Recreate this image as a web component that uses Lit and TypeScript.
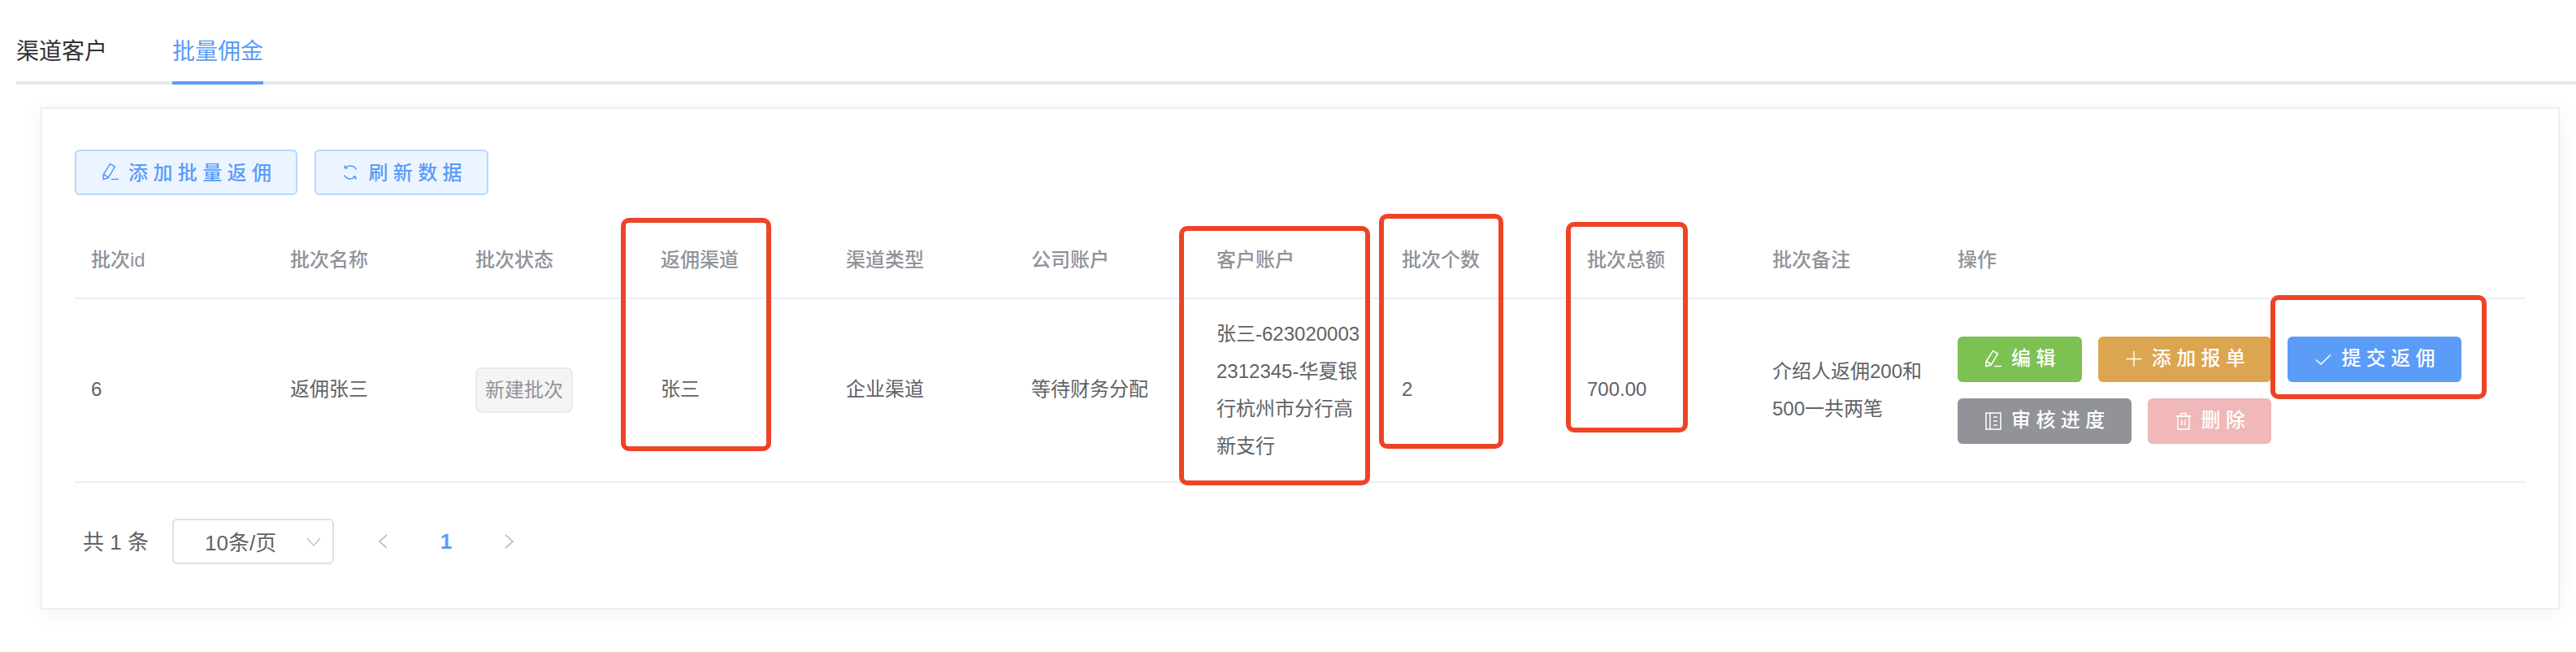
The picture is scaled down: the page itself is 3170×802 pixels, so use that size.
import { LitElement, css, html, svg } from "lit";
import { customElement } from "lit/decorators.js";

interface IAction {
  label: string;
  icon: keyof typeof ICONS;
  tone: string;
}

const ICONS = {
  edit: svg`<path d="M3 15 11.5 1.5 17.5 5 9 19 3 20.5Z"/><path d="M3.5 14.5 9 18"/><path d="M13 20.5H22"/>`,
  refresh: svg`<path d="M19.5 8.5A9 9 0 0 0 5.5 6.5"/><path d="M5.2 3.2 5.4 6.8 9 6.8"/><path d="M4.5 15.5A9 9 0 0 0 18.5 17.5"/><path d="M18.8 20.8 18.6 17.2 15 17.2"/>`,
  plus: svg`<path d="M12 2V21"/><path d="M2.5 11.5H21.5"/>`,
  check: svg`<path d="M3 12.5 9 18 21 6.5"/>`,
  tickets: svg`<path d="M3 2H21V22H3Z"/><path d="M8 2V22"/><path d="M12 7H17"/><path d="M12 12H17"/><path d="M12 17H17"/>`,
  trash: svg`<path d="M5 6H19V22H5Z"/><path d="M2.5 6H21.5"/><path d="M9 6V2.5H15V6"/><path d="M10 10.5V17"/><path d="M14 10.5V17"/>`,
};

const COLUMNS = [
  "批次id",
  "批次名称",
  "批次状态",
  "返佣渠道",
  "渠道类型",
  "公司账户",
  "客户账户",
  "批次个数",
  "批次总额",
  "批次备注",
  "操作",
];

const ACTIONS: Array<IAction> = [
  { label: "编辑", icon: "edit", tone: "green" },
  { label: "添加报单", icon: "plus", tone: "orange" },
  { label: "提交返佣", icon: "check", tone: "blue" },
  { label: "审核进度", icon: "tickets", tone: "gray" },
  { label: "删除", icon: "trash", tone: "pink" },
];

// red annotation boxes drawn over the table: x, y, width, height
const MARKS = [
  [764, 268, 185, 287],
  [1451, 278, 235, 319],
  [1697, 263, 153, 289],
  [1927, 273, 150, 259],
  [2794, 363, 266, 128],
];

@customElement("app-root")
export class AppRoot extends LitElement {
  icon(name: keyof typeof ICONS) {
    return html`<svg class="icon" viewBox="0 0 24 24">${ICONS[name]}</svg>`;
  }

  render() {
    return html`
      <div class="tabs">
        <div class="tab">渠道客户</div>
        <div class="tab active">批量佣金</div>
      </div>
      <div class="card">
        <div class="toolbar">
          <button class="btn plain">${this.icon("edit")}<span>添加批量返佣</span></button>
          <button class="btn plain">${this.icon("refresh")}<span>刷新数据</span></button>
        </div>
        <table>
          <colgroup>
            <col class="first" />
            ${COLUMNS.slice(1, -1).map(() => html`<col class="regular" />`)}
            <col />
          </colgroup>
          <thead>
            <tr>
              ${COLUMNS.map((c) => html`<th>${c}</th>`)}
            </tr>
          </thead>
          <tbody>
            <tr>
              <td><div class="single">6</div></td>
              <td><div class="single">返佣张三</div></td>
              <td><span class="tag">新建批次</span></td>
              <td><div class="single">张三</div></td>
              <td><div class="single">企业渠道</div></td>
              <td><div class="single">等待财务分配</div></td>
              <td>张三-6230200032312345-华夏银行杭州市分行高新支行</td>
              <td><div class="single">2</div></td>
              <td><div class="single">700.00</div></td>
              <td>介绍人返佣200和500一共两笔</td>
              <td>
                <div class="actions">
                  ${ACTIONS.map(
                    (a) => html`<button class="btn ${a.tone}">
                      ${this.icon(a.icon)}<span>${a.label}</span>
                    </button>`,
                  )}
                </div>
              </td>
            </tr>
          </tbody>
        </table>
        <div class="pager">
          <span class="total">共 1 条</span>
          <div class="select">
            <span>10条/页</span>
            <svg class="caret" viewBox="0 0 18 12"><path d="M1 2 9 11 17 2" /></svg>
          </div>
          <span class="page">
            <svg class="chev" viewBox="0 0 12 18"><path d="M11 1 2 9 11 17" /></svg>
          </span>
          <span class="page num">1</span>
          <span class="page">
            <svg class="chev" viewBox="0 0 12 18"><path d="M1 1 10 9 1 17" /></svg>
          </span>
        </div>
      </div>
      ${MARKS.map(
        ([x, y, w, h]) =>
          html`<div
            class="mark"
            style="left:${x}px;top:${y}px;width:${w}px;height:${h}px"
          ></div>`,
      )}
    `;
  }

  static styles = css`
    :host {
      display: block;
      position: relative;
      height: 802px;
      overflow: hidden;
      background: #fff;
      font-family: "Liberation Sans", "Noto Sans CJK SC", sans-serif;
      font-size: 24px;
      color: #606266;
    }
    .tabs {
      display: flex;
      gap: 80px;
      margin-left: 20px;
      padding-top: 27px;
      border-bottom: 4px solid #e4e7ed;
    }
    .tab {
      height: 73px;
      margin-bottom: -4px;
      font-size: 28px;
      line-height: 73px;
      color: #303133;
    }
    .tab.active {
      border-bottom: 4px solid #5a9cf8;
      color: #5a9cf8;
    }
    .card {
      margin: 28px 20px 0 50px;
      height: 618px;
      box-sizing: border-box;
      padding: 50px 40px 0;
      border: 2px solid #ebeef5;
      background: #fff;
      box-shadow: 0 4px 24px rgba(0, 0, 0, 0.06);
    }
    .toolbar {
      display: flex;
      gap: 21px;
      margin-bottom: 34px;
    }
    .btn {
      display: inline-flex;
      align-items: center;
      box-sizing: border-box;
      height: 56px;
      padding: 0 24px 0 30px;
      border: 2px solid transparent;
      border-radius: 6px;
      font: inherit;
      font-weight: 500;
      letter-spacing: 6.4px;
      color: #fff;
    }
    .btn span {
      margin-left: 10px;
      padding-bottom: 3px;
    }
    .icon {
      width: 24px;
      height: 24px;
      fill: none;
      stroke: currentColor;
      stroke-width: 1.5;
    }
    .plain {
      background: #ecf5ff;
      border-color: #b3d8ff;
      color: #5a9cf8;
    }
    .green {
      background: #7cc152;
    }
    .orange {
      background: #dca550;
    }
    .blue {
      background: #5a9cf8;
    }
    .gray {
      background: #919398;
    }
    .pink {
      background: #f0b8b8;
    }
    table {
      width: 100%;
      table-layout: fixed;
      border-collapse: separate;
      border-spacing: 0;
    }
    col.first {
      width: 245px;
    }
    col.regular {
      width: 228px;
    }
    th,
    td {
      padding: 0 20px;
      border-bottom: 2px solid #ebeef5;
      text-align: left;
      line-height: 46px;
      word-break: break-all;
    }
    th {
      height: 92px;
      box-sizing: content-box;
      font-weight: 500;
      color: #909399;
    }
    td {
      height: 224px;
      vertical-align: middle;
    }
    .single {
      margin-bottom: 3px;
    }
    .tag {
      display: inline-block;
      box-sizing: border-box;
      height: 56px;
      padding: 0 10px;
      border: 2px solid #e9e9eb;
      border-radius: 8px;
      background: #f4f4f5;
      line-height: 52px;
      color: #909399;
      vertical-align: middle;
      white-space: nowrap;
    }
    .actions {
      display: flex;
      flex-wrap: wrap;
      gap: 20px;
    }
    .pager {
      display: flex;
      align-items: center;
      margin-top: 44px;
      padding-left: 10px;
      font-size: 26px;
    }
    .total {
      width: 110px;
      padding-bottom: 4px;
    }
    .select {
      display: flex;
      align-items: center;
      justify-content: space-between;
      box-sizing: border-box;
      width: 199px;
      height: 56px;
      margin-right: 21px;
      padding: 0 14px 0 38px;
      border: 2px solid #dcdfe6;
      border-radius: 6px;
    }
    .select span {
      padding-bottom: 2px;
    }
    .caret {
      width: 18px;
      height: 12px;
      fill: none;
      stroke: #c0c4cc;
      stroke-width: 1.5;
    }
    .page {
      display: flex;
      align-items: center;
      justify-content: center;
      width: 78px;
      height: 56px;
    }
    .page.num {
      font-weight: 700;
      color: #5a9cf8;
    }
    .chev {
      width: 12px;
      height: 18px;
      fill: none;
      stroke: #c0c4cc;
      stroke-width: 2;
    }
    .mark {
      position: absolute;
      box-sizing: border-box;
      border: 6px solid #ee4327;
      border-radius: 10px;
    }
  `;
}

declare global {
  interface HTMLElementTagNameMap {
    "app-root": AppRoot;
  }
}
